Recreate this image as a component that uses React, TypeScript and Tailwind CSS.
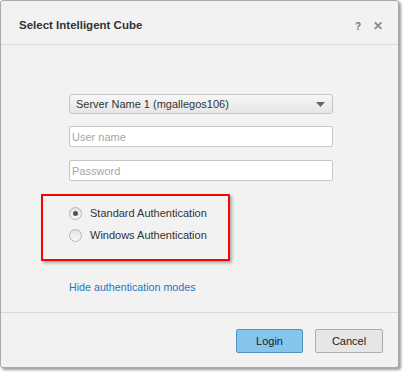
import React from "react";

const font = { fontFamily: '"Liberation Sans", Arial, sans-serif' };

const Radio: React.FC<{ checked?: boolean; label: string }> = ({ checked, label }) => (
    <label className="flex items-center h-[22px]">
        <span className="w-[13px] h-[13px] rounded-full border border-[#b4b4b4] bg-gradient-to-b from-[#e4e4e4] to-[#f8f8f8] flex items-center justify-center ml-[26px]">
            {checked && <span className="w-[5px] h-[5px] rounded-full bg-[#555]" />}
        </span>
        <span className="ml-[8px] text-[11px] text-[#333]">{label}</span>
    </label>
);

export default function App() {
    return (
        <div className="w-[403px] h-[372px] bg-white" style={font}>
            <div className="w-[399px] h-[368px] bg-[#f2f2f2] border border-[#a9a9a9] rounded-[3px] shadow-[2px_2px_3px_rgba(0,0,0,0.4)] flex flex-col">
                <div className="h-[44px] shrink-0 border-b border-[#d9d9d9] flex items-center pt-[7px] pl-[18px] pr-[15px]">
                    <h4 className="flex-1 font-bold text-[11.5px] text-[#333]">Select Intelligent Cube</h4>
                    <span className="text-[10px] font-bold text-[#777] mr-[12px]">?</span>
                    <span className="text-[12px] font-bold text-[#888]">✕</span>
                </div>
                <div className="flex-1 pt-[49px]">
                    <div className="ml-[68px] w-[264px] h-[20px] border border-[#c6c6c6] rounded-[3px] bg-gradient-to-b from-[#f7f7f7] to-[#e6e6e6] flex items-center px-[6px]">
                        <span className="flex-1 text-[11px] text-[#333]">Server Name 1 (mgallegos106)</span>
                        <svg width="9" height="5" viewBox="0 0 9 5" className="mr-[1px]"><path d="M0 0h9L4.5 5z" fill="#666" /></svg>
                    </div>
                    <input className="block ml-[68px] mt-[12px] w-[264px] h-[21px] border border-[#c6c6c6] rounded-[2px] bg-white px-[2px] text-[11px] outline-none placeholder:text-[#a5a5a5]" placeholder="User name" />
                    <input className="block ml-[68px] mt-[13px] w-[264px] h-[21px] border border-[#c6c6c6] rounded-[2px] bg-white px-[2px] text-[11px] outline-none placeholder:text-[#a5a5a5]" placeholder="Password" />
                    <div className="ml-[40px] mt-[13px] w-[189px] h-[67px] border-2 border-[#ff0000] shadow-[2px_2px_3px_rgba(0,0,0,0.3)] pt-[6px]">
                        <Radio checked label="Standard Authentication" />
                        <Radio label="Windows Authentication" />
                    </div>
                    <a className="block ml-[68px] mt-[18px] text-[10.7px] text-[#1a78c2]">Hide authentication modes</a>
                </div>
                <div className="h-[55px] shrink-0 border-t border-[#d9d9d9] flex justify-end items-start pt-[16px] pr-[15px] gap-[12px]">
                    <button className="w-[67px] h-[24px] border border-[#4f94c4] rounded-[2px] bg-[#85c5ec] text-[11px] text-[#222]">Login</button>
                    <button className="w-[68px] h-[24px] border border-[#adadad] rounded-[2px] bg-[#e6e6e6] text-[11px] text-[#222]">Cancel</button>
                </div>
            </div>
        </div>
    );
}
